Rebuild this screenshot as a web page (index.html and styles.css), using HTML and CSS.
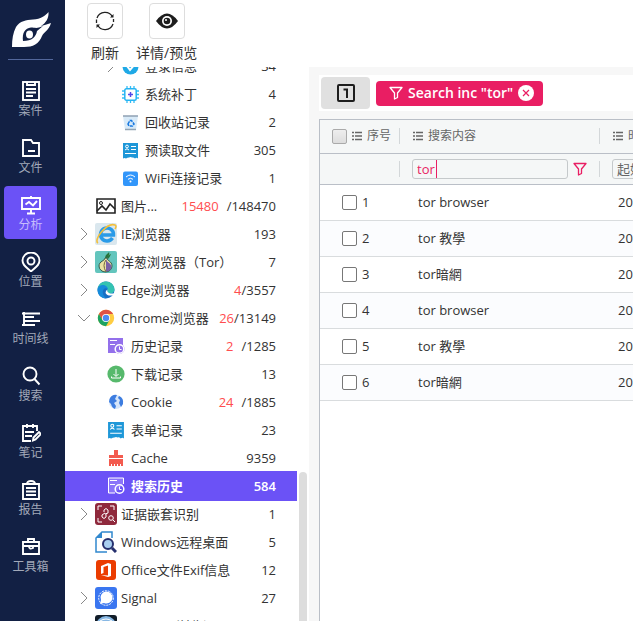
FILE: index.html
```html
<!DOCTYPE html>
<html lang="zh-CN">
<head>
<meta charset="utf-8">
<title>搜索历史</title>
<link rel="stylesheet" href="styles.css">
</head>
<body>
<svg class="defs" aria-hidden="true">
  <symbol id="i-right" viewBox="0 0 12 14"><path d="M3 1l6 6-6 6" fill="none" stroke="#888" stroke-width="1"/></symbol>
  <symbol id="i-down" viewBox="0 0 12 14"><path d="M0 4l6 6 6-6" fill="none" stroke="#888" stroke-width="1"/></symbol>
  <symbol id="i-list" viewBox="0 0 12 12"><path d="M1 2.500h2M4 2.500h7M1 6h2M4 6h7M1 9.500h2M4 9.500h7" stroke="#666" stroke-width="1.300"/></symbol>
  <symbol id="i-funnel" viewBox="0 0 14 14"><path d="M1 1.500h12L8.500 7v4.500l-3 1.500V7z" fill="none" stroke="currentColor" stroke-width="1.300" stroke-linejoin="round"/></symbol>
  <symbol id="i-form" viewBox="0 0 17 17"><path d="M1 1h15v15.500q-1.500-1.500-3 0-1.500-1.500-3-1-1.500-1-3 0-1.500 0-3 1-1.500-1-3 0z" fill="#1e97d8"/><g stroke="#fff" fill="none"><circle cx="5" cy="4.500" r="1.400"/><path d="M3 8q2-2.500 4 0M9 4.500h5M9 7.500h5M3 11.500h11"/></g></symbol>
  <symbol id="i-history" viewBox="0 0 18 18"><path d="M3 3.500h7M3 7.500h5" stroke="#fff" stroke-width="1.200"/><circle cx="12.500" cy="12" r="4.300" fill="none" stroke="#fff" stroke-width="1.500"/><path d="M12.500 9.500v3h2" fill="none" stroke="#fff"/></symbol>
</svg>
<div class="app">
  <nav class="rail">
    <div class="brand">
      <svg width="40" height="36" viewBox="0 0 40 36"><path d="M0 35C0 27 1 21 4 15 8 9 14 8 21 7.500 29 7 33 4 36.500 0 37 6 34 11 29 14c4-1 7-2 10-3-2 7-7 9-9 13-3 8-9 11-18 11z" fill="#fff"/><path d="M11 29C10 21 13 16 19 15.500c3 0 5 1 8 0l4-1.500-6 5c-1 6-5 10-14 10z" fill="#122044"/><ellipse cx="17.500" cy="22.500" rx="3.500" ry="4" fill="#fff"/></svg>
    </div>
    <a class="rail-item" href="#"><svg viewBox="0 0 20 20"><rect x="2" y="1" width="16" height="18"/><path d="M6 1v3h8V1M5 8h10M5 11.500h10M5 15h7"/></svg><span>案件</span></a>
    <a class="rail-item" href="#"><svg viewBox="0 0 20 20"><path d="M2 18V2h8l2 3h6v13zM7 13h7"/></svg><span>文件</span></a>
    <a class="rail-item active" href="#"><svg viewBox="0 0 20 20"><path d="M1 3h18v11H1zM10 1v2M10 14v4M6 18.500h8M4.500 9.500L8 7l4 3.500L16 6"/></svg><span>分析</span></a>
    <a class="rail-item" href="#"><svg viewBox="0 0 20 20"><path d="M10 19.500C5 15 1.500 13 1.500 8.500a8.500 8 0 0 1 17 0C18.500 13 15 15 10 19.500z"/><circle cx="10" cy="9" r="3.500"/></svg><span>位置</span></a>
    <a class="rail-item" href="#"><svg viewBox="0 0 20 20"><path d="M3 3v14M1 4.500h18M3 8h10M3 12h16M1 16h13"/></svg><span>时间线</span></a>
    <a class="rail-item" href="#"><svg viewBox="0 0 20 20"><circle cx="9" cy="8" r="6.500"/><path d="M13.500 13l5 5.500"/></svg><span>搜索</span></a>
    <a class="rail-item" href="#"><svg viewBox="0 0 20 20"><path d="M16 8V3H2v15h8M6 1v4M12 1v4M4 9h9M4 13h7M12 17.500l.5-3L18 9l2 2-5.500 5.500z"/></svg><span>笔记</span></a>
    <a class="rail-item" href="#"><svg viewBox="0 0 20 20"><path d="M2 4h16v15H2zM6 4q0-3 4-3t4 3M5 8h10M5 11.500h10M5 15h10"/></svg><span>报告</span></a>
    <a class="rail-item" href="#"><svg viewBox="0 0 20 20"><path d="M2 5h16v12H2zM7 5V2h6v3M2 9h16M8 9q0 4 4 2V9"/></svg><span>工具箱</span></a>
  </nav>
  <div class="work">
    <header class="toolbar">
      <button class="tool" type="button"><span class="tool-box"><svg width="22" height="22" viewBox="0 0 22 22" fill="none" stroke="#222" stroke-width="1.300"><path d="M3 8A8.500 8.500 0 0 1 18.500 7M19 14A8.500 8.500 0 0 1 3.500 15M2.500 13V9.500M19.500 9v3"/><path d="M16 7.500h3.500V4zM6 14.500H2.500V18z" fill="#222" stroke="none"/></svg></span>刷新</button>
      <button class="tool" type="button"><span class="tool-box"><svg width="22" height="16" viewBox="0 0 22 16"><path d="M0 8Q11-7 22 8 11 23 0 8z" fill="#1d1d1d"/><circle cx="11" cy="8" r="5" fill="#fff"/><circle cx="11" cy="8" r="3.300" fill="#1d1d1d"/><circle cx="10" cy="7" r="1" fill="#fff"/></svg></span>详情/预览</button>
    </header>
    <div class="panes">
      <aside class="side">
        <ul class="tree">
          <li class="row l3 open"><svg class="arrow"><use href="#i-right"/></svg><svg class="ic" viewBox="0 0 17 17"><circle cx="8.500" cy="8.500" r="8" fill="#1fa9e6"/><path d="M5 8l3 4 5-6" stroke="#fff" stroke-width="2" fill="none"/></svg><span class="name">登录信息</span><span class="count">34</span></li>
          <li class="row l3"><svg class="ic" viewBox="0 0 17 17"><path d="M5 0v17M8.500 0v17M12 0v17M0 5h17M0 8.500h17M0 12h17" stroke="#35bdf5" stroke-width="1.300"/><rect x="2.800" y="2.800" width="11.400" height="11.400" rx="1.500" fill="#fff" stroke="#25b4f3" stroke-width="1.500"/><path d="M8.500 6v5M6 8.500h5" stroke="#5548e8" stroke-width="1.500"/></svg><span class="name">系统补丁</span><span class="count">4</span></li>
          <li class="row l3"><svg class="ic" viewBox="0 0 17 17"><path d="M1 2h15l-2 14H3z" fill="#d8eaf8"/><path d="M1 2h15" stroke="#8fa1b3" stroke-width="1.500"/><path d="M3 15.500h11" stroke="#92a4b5" stroke-width="1.500"/><path d="M6 10l2-3.500h1.500L12 10l-1.500 2H7z" fill="none" stroke="#1677e0" stroke-width="1.500" stroke-dasharray="3 1"/></svg><span class="name">回收站记录</span><span class="count">2</span></li>
          <li class="row l3"><svg class="ic"><use href="#i-form"/></svg><span class="name">预读取文件</span><span class="count">305</span></li>
          <li class="row l3"><svg class="ic" viewBox="0 0 17 17"><rect x="1" y="1.500" width="15" height="14.500" rx="2" fill="#3296fa"/><path d="M4 7q4.500-4 9 0M6 9.300q2.500-2 5 0" stroke="#fff" fill="none"/><circle cx="8.500" cy="11.500" r="1" fill="#fff"/></svg><span class="name">WiFi连接记录</span><span class="count">1</span></li>
          <li class="row"><span class="arrow"></span><svg class="ic" viewBox="0 0 22 22"><path d="M2 4h18v14H2z" fill="none" stroke="#222" stroke-width="1.600"/><path d="M2 16l5-5 4 4 4-6 5 5" fill="none" stroke="#222" stroke-width="1.600"/><circle cx="6" cy="8" r="1.500" fill="none" stroke="#222"/></svg><span class="name">图片...</span><span class="hit spaced">15480</span><span class="count">/148470</span></li>
          <li class="row"><svg class="arrow"><use href="#i-right"/></svg><svg class="ic" viewBox="0 0 22 22"><rect width="22" height="22" rx="2" fill="#dae7ee"/><path d="M17.500 15A6.500 6.500 0 1 1 18.500 12H7" fill="none" stroke="#2a9be8" stroke-width="3.500"/><path d="M3 20C-2 17 12-1 20 2q2 1 0 4" fill="none" stroke="#f3bf3c" stroke-width="1.600"/></svg><span class="name">IE浏览器</span><span class="count">193</span></li>
          <li class="row"><svg class="arrow"><use href="#i-right"/></svg><svg class="ic" viewBox="0 0 22 22"><rect width="22" height="22" rx="2" fill="#63c5bd"/><path d="M10 8C10 3 13 3 14 1c1 3-1 4-2 7" fill="#28743a"/><path d="M12 7q1-3 4-4-1 3-3 5" fill="#28743a"/><path d="M10 7c0 3-6 3-6 8a6.500 6 0 0 0 13 0c0-5-5-5-5-8z" fill="#e9e2a2" stroke="#315a50"/><path d="M11 8c1 4 5.500 4 5.500 8q-1 4.500-5.500 4.500z" fill="#7961a7"/><path d="M11 9q-4 5 0 12" fill="none" stroke="#70683c"/></svg><span class="name">洋葱浏览器（Tor）</span><span class="count">7</span></li>
          <li class="row"><svg class="arrow"><use href="#i-right"/></svg><svg class="ic" viewBox="0 0 22 22"><circle cx="11" cy="11" r="8.500" fill="#176fc4"/><path d="M2.600 10C4 0 19 0 19.500 11c-1 5-8 4-7 1 1-5-6-7-9.900-2z" fill="#34c3b1"/><path d="M2.600 10C4 4 13 5 13 11c-3-5-9 2-2 8.500C5 19 2.200 15 2.600 10z" fill="#168bdb"/><path d="M12.500 10.500c-1 3 2 5 8 3.500l-1.500 2c-7 2-11-2-6.500-5.500z" fill="#fff"/></svg><span class="name">Edge浏览器</span><span class="hit">4</span><span class="count">/3557</span></li>
          <li class="row"><svg class="arrow"><use href="#i-down"/></svg><svg class="ic" viewBox="0 0 22 22"><circle cx="11" cy="11" r="8.200" fill="#ffcd42"/><path d="M3.900 6.900A8.200 8.200 0 0 1 18.100 6.900H11L7.500 13z" fill="#de5246"/><path d="M3.900 6.900A8.200 8.200 0 0 0 11 19.200l3.500-6.200H7.500z" fill="#1da362"/><circle cx="11" cy="11" r="4" fill="#fff"/><circle cx="11" cy="11" r="3.200" fill="#4a8af4"/></svg><span class="name">Chrome浏览器</span><span class="hit">26</span><span class="count">/13149</span></li>
          <li class="row l2"><svg class="ic" viewBox="0 0 18 18"><path d="M1 1h15v15H1z" fill="#9370eb"/><circle cx="12.500" cy="12" r="5" fill="#9370eb"/><use href="#i-history" width="18" height="18"/></svg><span class="name">历史记录</span><span class="hit spaced">2</span><span class="count">/1285</span></li>
          <li class="row l2"><svg class="ic" viewBox="0 0 18 18"><circle cx="9" cy="9" r="8.600" fill="#57b96c"/><path d="M9 4v7M6.500 9L9 11.500 11.500 9M4.500 11.500V13h9v-1.500" fill="none" stroke="#fff"/></svg><span class="name">下载记录</span><span class="count">13</span></li>
          <li class="row l2"><svg class="ic" viewBox="0 0 18 18"><circle cx="9" cy="9" r="7" fill="#d5e5fa"/><path d="M2.500 6Q5 1 10 2L8 6l2 2-3 2 2 3-1 3Q5 15 4 11L2 9zM12 3q5 2 4 8l-2 3-2-4 1-3-2-2z" fill="#3d7de0"/></svg><span class="name">Cookie</span><span class="hit spaced">24</span><span class="count">/1885</span></li>
          <li class="row l2"><svg class="ic" viewBox="0 0 18 18"><use href="#i-form" width="18" height="18"/></svg><span class="name">表单记录</span><span class="count">23</span></li>
          <li class="row l2"><svg class="ic" viewBox="0 0 18 18"><path d="M7 1h4v5h5v3H2V6h5zM2 10h14v7h-2v-2h-1v2h-2v-2h-1v2H8v-2H7v2H5v-2H4v2H2z" fill="#f35b4f"/></svg><span class="name">Cache</span><span class="count">9359</span></li>
          <li class="row l2 selected"><svg class="ic" viewBox="0 0 18 18"><path d="M16.500 7V1h-15v15H8" fill="#8b74f9" stroke="#fff"/><use href="#i-history" width="18" height="18"/></svg><span class="name">搜索历史</span><span class="count">584</span></li>
          <li class="row"><svg class="arrow"><use href="#i-right"/></svg><svg class="ic" viewBox="0 0 22 22"><rect width="22" height="22" rx="3" fill="#8f293c"/><g fill="none" stroke="#fff"><path d="M3 7V3h4M15 3h4v4M3 15v4h4"/><path d="M9 9V7q2-3 4 0v3l-3 1M11 11v3q-2 3-4 0v-2l3-2"/><circle cx="16" cy="15" r="2.300"/><path d="M18 17l2 2"/></g></svg><span class="name">证据嵌套识别</span><span class="count">1</span></li>
          <li class="row"><span class="arrow"></span><svg class="ic" viewBox="0 0 22 22"><path d="M17 7V1H7L1 7v14h11" fill="#fff" stroke="#3188ce" stroke-width="1.500"/><path d="M1 7l6-6v6z" fill="#3188ce"/><circle cx="13" cy="13" r="5" fill="#a9cff0" stroke="#26306e" stroke-width="2"/><path d="M17 17l4 4" stroke="#26306e" stroke-width="3"/></svg><span class="name">Windows远程桌面</span><span class="count">5</span></li>
          <li class="row"><span class="arrow"></span><svg class="ic" viewBox="0 0 22 22"><rect x="1" y="1" width="20" height="20" rx="3" fill="#eb3c00"/><path d="M6 7l7-3 3 1v12l-3 1-7-2 7 .5V6.500L8.500 8v6L6 15z" fill="#fff"/></svg><span class="name">Office文件Exif信息</span><span class="count">12</span></li>
          <li class="row"><svg class="arrow"><use href="#i-right"/></svg><svg class="ic" viewBox="0 0 22 22"><rect width="22" height="22" rx="3" fill="#3a76f0"/><circle cx="11" cy="11" r="7.300" fill="none" stroke="#fff" stroke-dasharray="2 1"/><path d="M5 17l1-4a6 6 0 1 1 3 3z" fill="#fff"/></svg><span class="name">Signal</span><span class="count">27</span></li>
          <li class="row"><span class="arrow"></span><svg class="ic" viewBox="0 0 22 22"><rect width="22" height="22" rx="3" fill="#111c28"/><circle cx="11" cy="11" r="10" fill="#88b8e4"/><path d="M5 6q6-4 12 0" stroke="#fff" fill="none"/></svg><span class="name">Waterfox浏览记录</span><span class="count">5</span></li>
        </ul>
        <div class="scroll"><div class="thumb"></div></div>
      </aside>
      <main class="main">
        <div class="filters">
          <button class="page-btn" type="button" aria-label="1"><svg width="18" height="18" viewBox="0 0 18 18" fill="none" stroke="#1d1d1d" stroke-width="2"><rect x="1" y="1" width="16" height="16" rx="1"/><path d="M6.500 5.500H10V14"/></svg></button>
          <button class="chip" type="button"><svg width="14" height="14"><use href="#i-funnel"/></svg><span>Search inc "tor"</span><svg class="close" width="16" height="16" viewBox="0 0 16 16"><circle cx="8" cy="8" r="8" fill="#fff"/><path d="M5 5l6 6M11 5l-6 6" stroke="#e91e63" stroke-width="1.200"/></svg></button>
        </div>
        <div class="grid">
          <table>
            <colgroup><col class="c-no"><col class="c-text"><col class="c-time"></colgroup>
            <thead>
              <tr class="heads">
                <th><div class="cell"><input class="all" type="checkbox" aria-label="全选"><svg width="12" height="12"><use href="#i-list"/></svg>序号</div></th>
                <th><div class="cell"><svg width="12" height="12"><use href="#i-list"/></svg>搜索内容</div></th>
                <th><div class="cell"><svg width="12" height="12"><use href="#i-list"/></svg>时间</div></th>
              </tr>
              <tr class="finds">
                <td><div class="cell"></div></td>
                <td><div class="cell"><span class="field"><input class="find" type="text" value="tor" aria-label="搜索内容"><i class="caret"></i></span><svg class="pink" width="14" height="14"><use href="#i-funnel"/></svg></div></td>
                <td><div class="cell"><input class="find date" type="text" value="起始" aria-label="起始时间"></div></td>
              </tr>
            </thead>
            <tbody>
              <tr><td><label><input type="checkbox">1</label></td><td>tor browser</td><td>2021</td></tr>
              <tr><td><label><input type="checkbox">2</label></td><td>tor 教學</td><td>2021</td></tr>
              <tr><td><label><input type="checkbox">3</label></td><td>tor暗網</td><td>2021</td></tr>
              <tr><td><label><input type="checkbox">4</label></td><td>tor browser</td><td>2021</td></tr>
              <tr><td><label><input type="checkbox">5</label></td><td>tor 教學</td><td>2021</td></tr>
              <tr><td><label><input type="checkbox">6</label></td><td>tor暗網</td><td>2021</td></tr>
            </tbody>
          </table>
        </div>
      </main>
    </div>
  </div>
</div>
</body>
</html>
```

FILE: styles.css
```css
* { box-sizing: border-box; }
body {
  margin: 0;
  overflow: hidden;
  background: #fff;
  color: #333;
  font: 13px/20px "Open Sans", "Noto Sans CJK SC", sans-serif;
}
button, input { font: inherit; color: inherit; margin: 0; padding: 0; }
svg { flex: none; display: block; }
.defs { position: absolute; width: 0; height: 0; }
.app { display: flex; height: 100vh; }

.rail {
  flex: none;
  width: 65px;
  padding-left: 4px;
  background: #122044;
  display: flex;
  flex-direction: column;
  gap: 4px;
}
.brand {
  width: 45px;
  height: 60px;
  margin: 0 0 8px 4px;
  padding: 12px 0 0 4px;
  border-bottom: 1px solid #53679b;
}
.rail-item {
  width: 53px;
  height: 53px;
  flex: none;
  padding-top: 9px;
  border-radius: 4px;
  display: flex;
  flex-direction: column;
  align-items: center;
  color: #a2a9b9;
  font-size: 12px;
  text-decoration: none;
}
.rail-item svg {
  width: 20px;
  height: 20px;
  fill: none;
  stroke: #fff;
  stroke-width: 1.9;
}
.rail-item.active { background: #6b52f6; color: #c6bdfc; }

.work { flex: 1; min-width: 0; display: flex; flex-direction: column; }
.toolbar { flex: none; height: 67px; padding: 3px 0 0 22px; display: flex; gap: 13px; align-items: flex-start; }
.tool {
  min-width: 36px;
  border: 0;
  background: none;
  font-size: 14px;
  display: flex;
  flex-direction: column;
  align-items: center;
  gap: 4px;
}
.tool-box {
  width: 36px;
  height: 36px;
  border: 1px solid #ddd;
  border-radius: 4px;
  display: flex;
  align-items: center;
  justify-content: center;
}
.panes { flex: 1; min-height: 0; display: flex; }

.side { flex: none; width: 244px; display: flex; overflow: hidden; }
.tree { list-style: none; width: 232px; margin: -15px 0 0; padding: 0; }
.row { height: 28px; padding: 0 21px 0 13px; display: flex; align-items: center; white-space: nowrap; }
.arrow { flex: none; width: 12px; height: 14px; margin-right: 5px; }
.ic { width: 22px; height: 22px; margin-right: 4px; }
.l2 { padding-left: 42px; }
.l2 .ic { width: 18px; height: 18px; margin-right: 6px; }
.l3 { padding-left: 57px; }
.l3.open { padding-left: 40px; }
.l3 .ic { width: 17px; height: 17px; margin-right: 6px; }
.name { flex: 1; }
.hit { color: #ff4d4f; }
.hit.spaced { margin-right: 8px; }
.selected { height: 30px; margin: -1px 0; background: #6b52f6; color: #fff; font-weight: 600; }
.scroll { flex: 1; padding: 405px 2px 0; }
.thumb { width: 8px; height: 100%; border-radius: 4px 4px 0 0; background: #ddd; }

.main { flex: 1; min-width: 0; padding: 8px 0 0 10px; background: #f7f7f7; display: flex; flex-direction: column; overflow: hidden; }
.filters { flex: none; height: 36px; padding: 2px; background: #fff; display: flex; align-items: center; gap: 6px; }
.page-btn { width: 49px; height: 32px; border: 0; border-radius: 4px; background: #e0e0e0; display: flex; align-items: center; justify-content: center; }
.chip { height: 25px; padding: 0 9px 0 13px; border: 0; border-radius: 4px; background: #e91e63; color: #fff; display: flex; align-items: center; gap: 5px; font-size: 14px; font-weight: 600; white-space: nowrap; }

.grid { flex: 1; margin-top: 8px; border: solid #babfc7; border-width: 1px 0 0 1px; background: #fff; }
table { width: 100%; min-width: 480px; table-layout: fixed; border-collapse: collapse; }
.c-no { width: 80px; }
.c-text { width: 200px; }
th, td { padding: 0; text-align: left; font-weight: 400; border-bottom: 1px solid #d9dcde; white-space: nowrap; }
thead { background: #f5f7f7; color: #666; font-size: 12px; }
thead th, thead td { border-color: #babfc7; }
.heads { height: 33px; }
.finds { height: 31px; }
.cell { height: 16px; padding-left: 12px; border-right: 1px solid #d3d7d9; display: flex; align-items: center; gap: 4px; }
.all {
  appearance: none;
  width: 15px;
  height: 15px;
  border: 1px solid #aaa;
  border-radius: 2px;
  background: linear-gradient(#eee, #ddd);
}
.field { position: relative; }
.find { width: 156px; height: 20px; padding-left: 4px; border: 1px solid #c5c9cb; border-radius: 3px; background: #f5f7f7; color: #e91e63; font-size: 13px; display: block; }
.find.date { color: #666; }
.caret { position: absolute; left: 24px; top: 1px; width: 1px; height: 18px; background: #e91e63; }
.pink { color: #e91e63; margin-left: 1px; }
tbody tr { height: 36px; }
tbody tr:nth-child(even) { background: #fbfcfe; }
tbody td { padding-left: 18px; }
tbody td:first-child { padding-left: 22px; }
label { display: flex; align-items: center; gap: 5px; }
label input { appearance: none; width: 15px; height: 15px; border: 1px solid #777; border-radius: 2px; background: #fff; }
```
